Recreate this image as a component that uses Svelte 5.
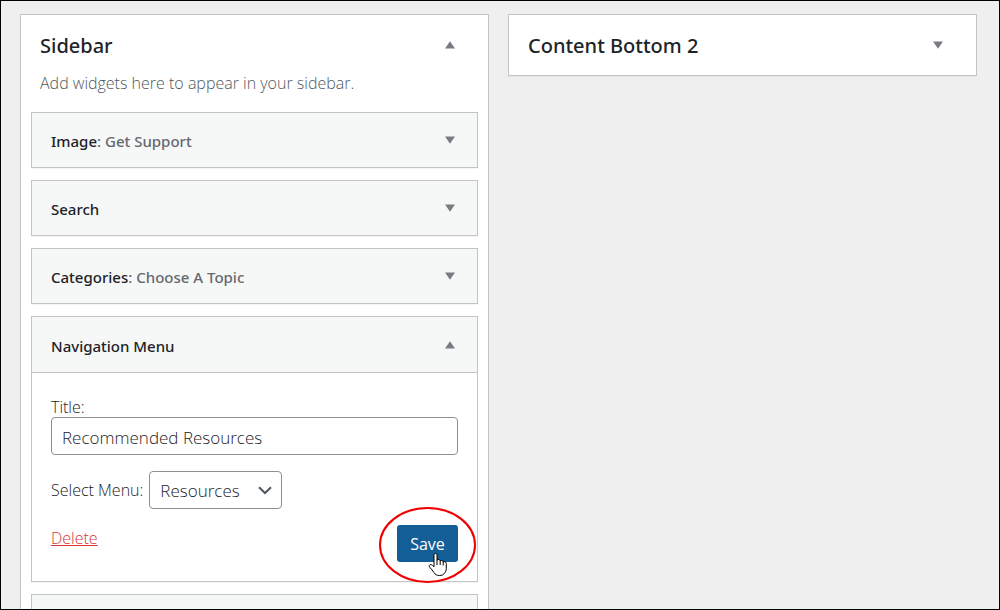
<script lang="ts">
  type Widget = { id: string; name: string; title?: string };

  const collapsed: Widget[] = [
    { id: 'image', name: 'Image', title: 'Get Support' },
    { id: 'search', name: 'Search' },
    { id: 'categories', name: 'Categories', title: 'Choose A Topic' },
  ];

  let menuTitle = $state('Recommended Resources');
  let menu = $state('resources');
</script>

{#snippet arrow(up: boolean)}
  <svg class="arrow" viewBox="0 0 10 8" aria-hidden="true">
    <path d={up ? 'M5 0.2 10 7.6H0Z' : 'M0 0.4H10L5 7.8Z'} />
  </svg>
{/snippet}

<main class="screen">
  <section class="area">
    <header class="area-head">
      <h2>Sidebar</h2>
      <button class="toggle" aria-label="Collapse Sidebar" aria-expanded="true">{@render arrow(true)}</button>
    </header>
    <p class="description">Add widgets here to appear in your sidebar.</p>

    <div class="widgets">
      {#each collapsed as widget (widget.id)}
        <article class="widget">
          <header class="widget-head">
            <h3>{widget.name}{#if widget.title}<span>: {widget.title}</span>{/if}</h3>
            <button class="toggle" aria-label="Edit {widget.name}" aria-expanded="false">{@render arrow(false)}</button>
          </header>
        </article>
      {/each}

      <article class="widget">
        <header class="widget-head open">
          <h3>Navigation Menu</h3>
          <button class="toggle" aria-label="Close Navigation Menu" aria-expanded="true">{@render arrow(true)}</button>
        </header>
        <form class="widget-body" onsubmit={(e) => e.preventDefault()}>
          <label class="field-label" for="nav-title">Title:</label>
          <input id="nav-title" type="text" bind:value={menuTitle} />

          <div class="menu-row">
            <label for="nav-menu">Select Menu:</label>
            <span class="select-wrap">
              <select id="nav-menu" bind:value={menu}>
                <option value="resources">Resources</option>
              </select>
              <svg class="chevron" viewBox="0 0 14 9" aria-hidden="true">
                <path d="M1 1.2 7 7 13 1.2" />
              </svg>
            </span>
          </div>

          <div class="actions">
            <a class="delete" href="#delete">Delete</a>
            <span class="save-wrap">
              <button class="save" type="submit">Save</button>
              <svg class="highlight" viewBox="0 0 98 78" aria-hidden="true">
                <ellipse cx="49.5" cy="39" rx="47.5" ry="37" />
              </svg>
              <svg class="pointer" viewBox="0 0 20 25" aria-hidden="true">
                <path
                  d="M7.5 1.5C8.600 1.500 9 2.200 9 3.300V8.200C9.700 7.100 12 7.200 12.200 8.900C13.100 7.900 15 8.200 15.200 9.900C16.300 9.300 18.300 9.700 18.300 11.500V16.500C18.300 18.500 17.500 20 16.500 21.200C15.600 22.700 13.900 23.500 11.500 23.500C8.700 23.500 7.200 22.500 5.900 20.500C4.800 18.600 3.600 17.200 2 15.600C0.900 14.400 1 13.300 1.900 12.700C2.900 12.200 4 12.800 6 14.800V3.300C6 2.200 6.400 1.500 7.500 1.500Z"
                />
                <path d="M9 8V13M12.200 8.900V13M15.200 9.900V13.500" />
              </svg>
            </span>
          </div>
        </form>
      </article>

      <article class="widget">
        <header class="widget-head"></header>
      </article>
    </div>
  </section>

  <section class="area">
    <header class="area-head">
      <h2>Content Bottom 2</h2>
      <button class="toggle" aria-label="Expand Content Bottom 2" aria-expanded="false">{@render arrow(false)}</button>
    </header>
  </section>
</main>

<style>
  :global(body) {
    margin: 0;
    background: #efefef;
  }
  .screen {
    box-sizing: border-box;
    height: 100vh;
    overflow: hidden;
    display: grid;
    grid-template-columns: 1fr 1fr;
    align-items: start;
    gap: 19px;
    padding: 13px 22px 0 19px;
    border: 1px solid #000;
    background: #efefef;
    color: #1d2327;
    font-family: 'Open Sans', 'Noto Sans', sans-serif;
    font-size: 16px;
    font-weight: 300;
    line-height: 20px;
  }
  .area {
    background: #fff;
    border: 1px solid #c3c4c7;
    box-shadow: 0 1px 1px rgba(0, 0, 0, 0.04);
  }
  .area-head {
    display: flex;
    align-items: center;
    justify-content: space-between;
    height: 60px;
    padding: 0 29px 0 19px;
  }
  h2,
  h3 {
    margin: 0;
    padding-top: 2px;
    color: #1d2327;
    font-family: 'Noto Sans', 'Open Sans', sans-serif;
    font-weight: 500;
  }
  h2 {
    font-size: 20px;
    line-height: 28px;
  }
  h3 {
    font-size: 15px;
  }
  h3 span {
    color: #646970;
  }
  .toggle {
    display: flex;
    align-items: center;
    justify-content: center;
    width: 18px;
    height: 28px;
    padding: 0;
    border: 0;
    background: none;
    cursor: pointer;
  }
  .arrow {
    width: 10px;
    height: 8px;
    fill: #787c82;
  }
  .description {
    margin: -2px 0 0;
    padding: 0 19px 19px;
    color: #50575e;
  }
  .widgets {
    display: flex;
    flex-direction: column;
    gap: 12px;
    padding: 0 10px 12px;
  }
  .widget {
    border: 1px solid #c3c4c7;
    box-shadow: 0 1px 1px rgba(0, 0, 0, 0.04);
  }
  .widget-head {
    display: flex;
    align-items: center;
    justify-content: space-between;
    height: 54px;
    padding: 0 18px 0 19px;
    background: #f6f7f7;
  }
  .widget-head.open {
    height: 55px;
    border-bottom: 1px solid #c3c4c7;
  }
  .widget-body {
    padding: 24px 19px 19px;
  }
  .field-label {
    display: block;
  }
  input,
  select {
    box-sizing: border-box;
    height: 38px;
    border: 1px solid #8c8f94;
    border-radius: 4px;
    background: #fff;
    color: #1d2327;
    font: inherit;
    font-size: 17px;
  }
  input {
    width: 100%;
    padding: 2px 10px 0;
  }
  .menu-row {
    display: flex;
    align-items: center;
    gap: 6px;
    margin-top: 16px;
  }
  .select-wrap {
    position: relative;
    display: flex;
  }
  select {
    width: 133px;
    padding: 2px 32px 0 10px;
    appearance: none;
  }
  .chevron {
    position: absolute;
    top: 15px;
    right: 10px;
    width: 14px;
    height: 9px;
    fill: none;
    stroke: #50575e;
    stroke-width: 2;
    pointer-events: none;
  }
  .actions {
    display: flex;
    align-items: flex-start;
    justify-content: space-between;
    margin-top: 16px;
  }
  .delete {
    margin-top: 3px;
    color: #d63638;
  }
  .save-wrap {
    position: relative;
    display: flex;
  }
  .save {
    width: 61px;
    height: 37px;
    padding: 0;
    border: 0;
    border-radius: 3px;
    background: #135e96;
    color: #fff;
    font: inherit;
    font-weight: 400;
  }
  .highlight,
  .pointer {
    position: absolute;
    fill: none;
    pointer-events: none;
  }
  .highlight {
    top: -19px;
    left: -19px;
    width: 98px;
    height: 78px;
    stroke: #f00000;
    stroke-width: 2;
  }
  .pointer {
    top: 27px;
    left: 31px;
    width: 20px;
    height: 25px;
    stroke: #000;
    stroke-width: 1;
  }
  .pointer path:first-child {
    fill: #fff;
  }
</style>
